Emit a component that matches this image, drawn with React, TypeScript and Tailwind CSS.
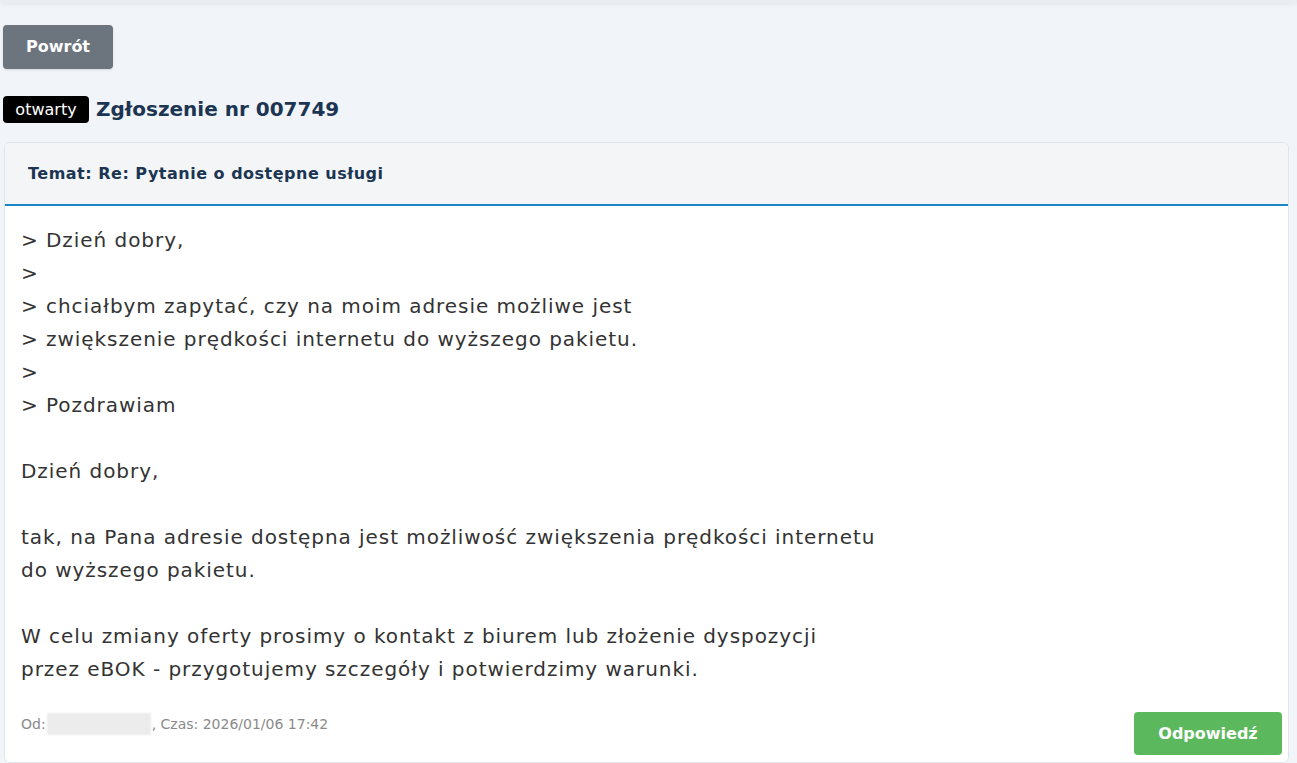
const message = `> Dzień dobry,
>
> chciałbym zapytać, czy na moim adresie możliwe jest
> zwiększenie prędkości internetu do wyższego pakietu.
>
> Pozdrawiam

Dzień dobry,

tak, na Pana adresie dostępna jest możliwość zwiększenia prędkości internetu
do wyższego pakietu.

W celu zmiany oferty prosimy o kontakt z biurem lub złożenie dyspozycji
przez eBOK - przygotujemy szczegóły i potwierdzimy warunki.`;

const App = () => {
  return (
    <div className="min-h-screen bg-[#f1f5f9] font-['DejaVu_Sans',sans-serif] overflow-hidden">
      <div className="h-[3px] bg-[#e9edf1] shadow-[0_1px_4px_rgba(0,0,0,0.08)]" />

      <div className="pl-[3px] pr-[8px] pt-[22px]">
        <button className="h-[44px] w-[110px] rounded-[4px] bg-[#6c757d] text-[16px] font-bold text-white shadow-sm">
          Powrót
        </button>

        <div className="mt-[27px] flex items-center gap-[7px]">
          <span className="flex h-[27px] w-[86px] items-center justify-center rounded-[4px] bg-black text-[16px] font-medium text-white">
            otwarty
          </span>
          <h1 className="text-[20px] leading-[27px] font-bold text-[#1c3553]">
            Zgłoszenie nr 007749
          </h1>
        </div>

        <div className="mt-[19px] ml-[1px] rounded-[6px] border border-[#e2e6ea] bg-white">
          <div className="flex h-[63px] items-center rounded-t-[6px] border-b-2 border-[#1a86c8] bg-[#f3f5f7] px-[23px]">
            <h2 className="text-[16px] font-bold tracking-[0.5px] text-[#1c3553]">
              Temat: Re: Pytanie o dostępne usługi
            </h2>
          </div>

          <div className="px-[16px] pt-[18px]">
            <p className="whitespace-pre-wrap text-[20px] leading-[33px] tracking-[0.95px] text-[#333]">
              {message}
            </p>
          </div>

          <div className="mt-[26px] flex items-end justify-between pb-[7px] pl-[16px] pr-[6px]">
            <div className="mb-[20px] flex items-center text-[14px] text-[#8a8a8a]">
              <span>Od:</span>
              <span className="mx-[1px] h-[22px] w-[104px] bg-[#ececec] blur-[1px]" />
              <span>, Czas: 2026/01/06 17:42</span>
            </div>
            <button className="h-[43px] w-[148px] rounded-[4px] bg-[#5cb85c] text-[16px] font-bold text-white">
              Odpowiedź
            </button>
          </div>
        </div>
      </div>
    </div>
  );
};

export default App;
